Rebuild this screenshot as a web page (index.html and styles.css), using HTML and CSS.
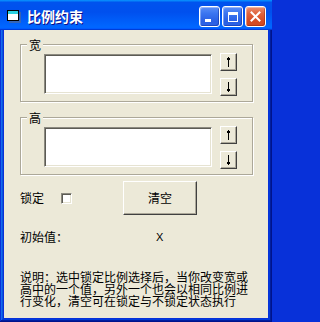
FILE: index.html
```html
<!DOCTYPE html>
<html lang="zh-CN">
<head>
<meta charset="utf-8">
<title>比例约束</title>
<link rel="stylesheet" href="styles.css">
</head>
<body>
<div class="window">
  <div class="titlebar">
    <svg class="app-icon" width="14" height="13" viewBox="0 0 14 13" shape-rendering="crispEdges">
      <rect x="2" y="2" width="12" height="11" fill="#5a6a8a" opacity="0.6"/>
      <rect x="0" y="0" width="12" height="11" fill="#000"/>
      <rect x="1" y="1" width="10" height="3" fill="#2ad0e0"/>
      <rect x="1" y="4" width="10" height="6" fill="#fff"/>
    </svg>
    <span class="title">比例约束</span>
    <div class="controls">
      <button class="ctl ctl-min" aria-label="最小化"><span class="min-bar"></span></button>
      <button class="ctl ctl-max" aria-label="最大化"><span class="max-box"></span></button>
      <button class="ctl ctl-close" aria-label="关闭">
        <svg width="11" height="11" viewBox="0 0 11 11"><path d="M1.5 1.5 L9.5 9.5 M9.5 1.5 L1.5 9.5" stroke="#fff" stroke-width="2" stroke-linecap="square"/></svg>
      </button>
    </div>
  </div>
  <div class="frame">
    <div class="client">
      <div class="group">
        <div class="legend">宽</div>
        <div class="group-row">
          <div class="textbox"></div>
          <div class="spin">
            <button class="btn arrow-btn" aria-label="增加">
              <svg width="5" height="10" viewBox="0 0 5 10" shape-rendering="crispEdges"><rect x="2" y="0" width="1" height="10"/><rect x="1" y="1" width="3" height="2"/></svg>
            </button>
            <button class="btn arrow-btn" aria-label="减少">
              <svg width="5" height="10" viewBox="0 0 5 10" shape-rendering="crispEdges"><rect x="2" y="0" width="1" height="10"/><rect x="1" y="7" width="3" height="2"/></svg>
            </button>
          </div>
        </div>
      </div>
      <div class="group group-gap">
        <div class="legend">高</div>
        <div class="group-row">
          <div class="textbox"></div>
          <div class="spin">
            <button class="btn arrow-btn" aria-label="增加">
              <svg width="5" height="10" viewBox="0 0 5 10" shape-rendering="crispEdges"><rect x="2" y="0" width="1" height="10"/><rect x="1" y="1" width="3" height="2"/></svg>
            </button>
            <button class="btn arrow-btn" aria-label="减少">
              <svg width="5" height="10" viewBox="0 0 5 10" shape-rendering="crispEdges"><rect x="2" y="0" width="1" height="10"/><rect x="1" y="7" width="3" height="2"/></svg>
            </button>
          </div>
        </div>
      </div>
      <div class="lock-row">
        <span class="label">锁定</span>
        <span class="checkbox"></span>
        <button class="btn clear-btn">清空</button>
      </div>
      <div class="init-row">
        <span class="label">初始值：</span>
        <span class="value">X</span>
      </div>
      <p class="note">说明：选中锁定比例选择后，当你改变宽或高中的一个值，另外一个也会以相同比例进行变化，清空可在锁定与不锁定状态执行</p>
    </div>
  </div>
</div>
</body>
</html>
```

FILE: styles.css
```css
* { box-sizing: border-box; }
html, body {
  margin: 0;
  padding: 0;
  width: 272px;
  height: 322px;
  overflow: hidden;
}
body {
  font-family: "Noto Sans CJK SC", "Liberation Sans", sans-serif;
  font-size: 12px;
  line-height: 12px;
  color: #000;
  background: #0831d9;
}
.window {
  width: 272px;
  height: 322px;
  display: flex;
  flex-direction: column;
  background: #0831d9;
}
.titlebar {
  height: 30px;
  flex: none;
  display: flex;
  align-items: center;
  padding: 2px 0 0 7px;
  background: linear-gradient(180deg, #0997ff, #0053ee 8%, #0050ee 40%, #0066ff 88%, #0066ff 93%, #005bff 95%, #003dd7 96%, #003dd7);
}
.app-icon { flex: none; }
.title {
  margin-left: 6px;
  color: #fff;
  font-weight: bold;
  font-size: 14px;
  line-height: 16px;
  text-shadow: 1px 1px #0f1089;
}
.controls {
  margin-left: auto;
  align-self: flex-start;
  margin-top: 4px;
  padding-right: 6px;
  display: flex;
  gap: 2px;
}
.ctl {
  width: 21px;
  height: 21px;
  padding: 0;
  margin: 0;
  border: 1px solid #fff;
  border-radius: 3px;
  position: relative;
  display: flex;
  align-items: center;
  justify-content: center;
  background: linear-gradient(180deg, #5b8ff7 0%, #3a74f0 35%, #2a5fe3 75%, #2d63e6 100%);
  box-shadow: inset -1px -1px rgba(0, 20, 120, 0.35), inset 1px 1px rgba(255, 255, 255, 0.35);
}
.ctl-close {
  background: linear-gradient(180deg, #ea8f6f 0%, #e0633d 35%, #d44b23 75%, #cf4a24 100%);
  box-shadow: inset -1px -1px rgba(120, 20, 0, 0.35), inset 1px 1px rgba(255, 255, 255, 0.35);
}
.min-bar {
  position: absolute;
  left: 5px;
  top: 12px;
  width: 6px;
  height: 3px;
  background: #fff;
}
.max-box {
  width: 10px;
  height: 10px;
  border: 1px solid #fff;
  border-top-width: 3px;
}
.frame {
  flex: 1;
  padding: 0 4px 4px;
  box-shadow: inset -1px -1px #00138c, inset 1px 0 #0831d9, inset -2px -2px #001ea0, inset 2px 0 #166aee, inset -3px -3px #003bda, inset 3px 0 #0855dd;
}
.client {
  height: 100%;
  background: #ece9d8;
  padding: 14px 0 0 16px;
}
.group {
  width: 233px;
  height: 58px;
  border: 1px solid #aca899;
  box-shadow: inset 1px 1px #fff, 1px 1px #fff;
}
.group-gap { margin-top: 15px; }
.legend {
  margin: -6px 0 0 6px;
  padding: 0 2px;
  width: fit-content;
  height: 12px;
  background: #ece9d8;
}
.group-row {
  margin-top: 2px;
  padding-left: 23px;
  display: flex;
  align-items: center;
  gap: 8px;
  height: 42px;
}
.textbox {
  width: 168px;
  height: 40px;
  background: #fff;
  border: 1px solid;
  border-color: #8c8a80 #fff #fff #8c8a80;
  box-shadow: inset 1px 1px #5c5b54, inset -1px -1px #e6e3d2;
}
.spin {
  display: flex;
  flex-direction: column;
  gap: 7px;
}
.btn {
  margin: 0;
  padding: 0;
  font: inherit;
  color: #000;
  background: #ece9d8;
  border: 1px solid;
  border-color: #fff #404040 #404040 #fff;
  box-shadow: inset -1px -1px #aca899;
  display: flex;
  align-items: center;
  justify-content: center;
}
.arrow-btn {
  width: 17px;
  height: 18px;
}
.arrow-btn svg { fill: #000; }
.lock-row {
  margin-top: 6px;
  display: flex;
  align-items: center;
  height: 34px;
}
.checkbox {
  margin-left: 17px;
  width: 11px;
  height: 11px;
  background: #fff;
  border: 1px solid;
  border-color: #8c8a80 #fff #fff #8c8a80;
  box-shadow: inset 1px 1px #5c5b54, inset -1px -1px #e6e3d2;
}
.clear-btn {
  margin-left: 51px;
  width: 74px;
  height: 34px;
}
.init-row {
  margin-top: 16px;
  display: grid;
  grid-template-columns: 136px auto;
  height: 12px;
}
.value {
  font-family: "Liberation Sans", sans-serif;
  font-size: 11px;
}
.note {
  margin: 28px 0 0;
  width: 232px;
  line-height: 12px;
}
```
